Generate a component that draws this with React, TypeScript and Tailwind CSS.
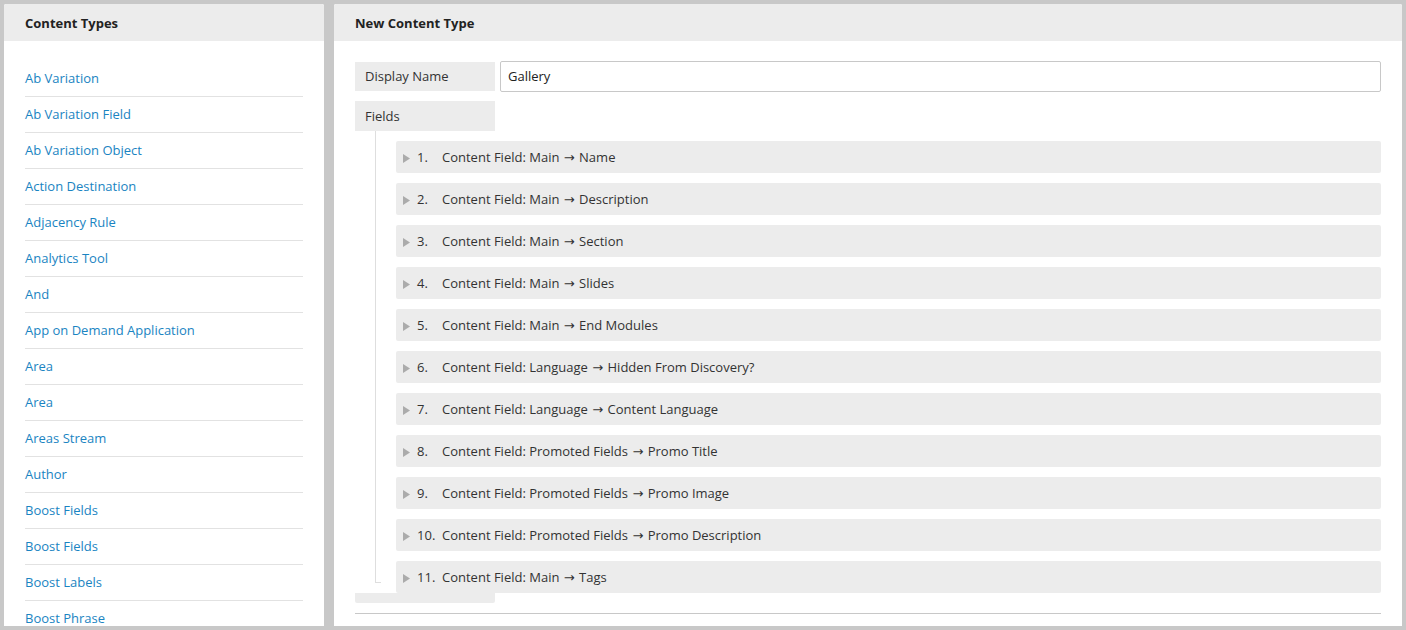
const types = [
  "Ab Variation",
  "Ab Variation Field",
  "Ab Variation Object",
  "Action Destination",
  "Adjacency Rule",
  "Analytics Tool",
  "And",
  "App on Demand Application",
  "Area",
  "Area",
  "Areas Stream",
  "Author",
  "Boost Fields",
  "Boost Fields",
  "Boost Labels",
  "Boost Phrase",
];

const fields: [string, string][] = [
  ["Main", "Name"],
  ["Main", "Description"],
  ["Main", "Section"],
  ["Main", "Slides"],
  ["Main", "End Modules"],
  ["Language", "Hidden From Discovery?"],
  ["Language", "Content Language"],
  ["Promoted Fields", "Promo Title"],
  ["Promoted Fields", "Promo Image"],
  ["Promoted Fields", "Promo Description"],
  ["Main", "Tags"],
];

export default function App() {
  return (
    <div
      className="h-[630px] overflow-hidden bg-[#c8c8c8] p-1 flex gap-[10px] text-[13px] text-[#333]"
      style={{ fontFamily: '"Open Sans", "Liberation Sans", sans-serif' }}
    >
      {/* Sidebar */}
      <div className="w-[320px] h-[622px] shrink-0 bg-white rounded-t-[2px] overflow-hidden">
        <div className="h-[37px] pt-[2px] bg-[#ececec] flex items-center px-[21px] font-bold text-[#222]">
          Content Types
        </div>
        <ul className="px-[21px] pt-[20px]">
          {types.map((t, i) => (
            <li key={i} className="h-[36px] flex items-center border-b border-[#e2e2e2] text-[#1a84c2]">
              {t}
            </li>
          ))}
        </ul>
      </div>

      {/* Main panel */}
      <div className="flex-1 h-[622px] bg-white rounded-t-[2px] overflow-hidden">
        <div className="h-[37px] pt-[2px] bg-[#ececec] flex items-center px-[21px] font-bold text-[#222]">
          New Content Type
        </div>
        <div className="px-[21px] pt-[20px]">
          <div className="flex items-center gap-[5px]">
            <div className="w-[140px] h-[29px] bg-[#ececec] flex items-center px-[10px]">Display Name</div>
            <div className="flex-1 h-[31px] border border-[#c8c8c8] rounded-[2px] flex items-center px-[7px] text-[#222]">
              Gallery
            </div>
          </div>
          <div className="mt-[9px] w-[140px] h-[30px] pt-[1px] bg-[#ececec] flex items-center px-[10px]">Fields</div>
          <div className="relative pl-[41px] pt-[10px] flex flex-col gap-[10px]">
            <div className="absolute left-[20px] top-0 h-[452px] w-[6px] border-l border-b border-[#dedede]" />
            {fields.map(([group, name], i) => (
              <div key={i} className="h-[32px] pt-[2px] bg-[#ececec] rounded-[2px] flex items-center pl-[7px]">
                <svg width="7" height="9" viewBox="0 0 7 9" className="mr-[7px] shrink-0">
                  <polygon points="0,0 7,4.5 0,9" fill="#ababab" />
                </svg>
                <span className="w-[25px]">{i + 1}.</span>
                <span>
                  Content Field: {group}{" "}
                  <span style={{ fontFamily: '"DejaVu Sans", sans-serif' }} className="text-[13px] leading-none mx-[1px]">→</span>{" "}
                  {name}
                </span>
              </div>
            ))}
          </div>
          <div className="w-[140px] h-[10px] bg-[#ececec] rounded-b-[2px]" />
          <div className="mt-[10px] border-t border-[#c8c8c8]" />
        </div>
      </div>
    </div>
  );
}
